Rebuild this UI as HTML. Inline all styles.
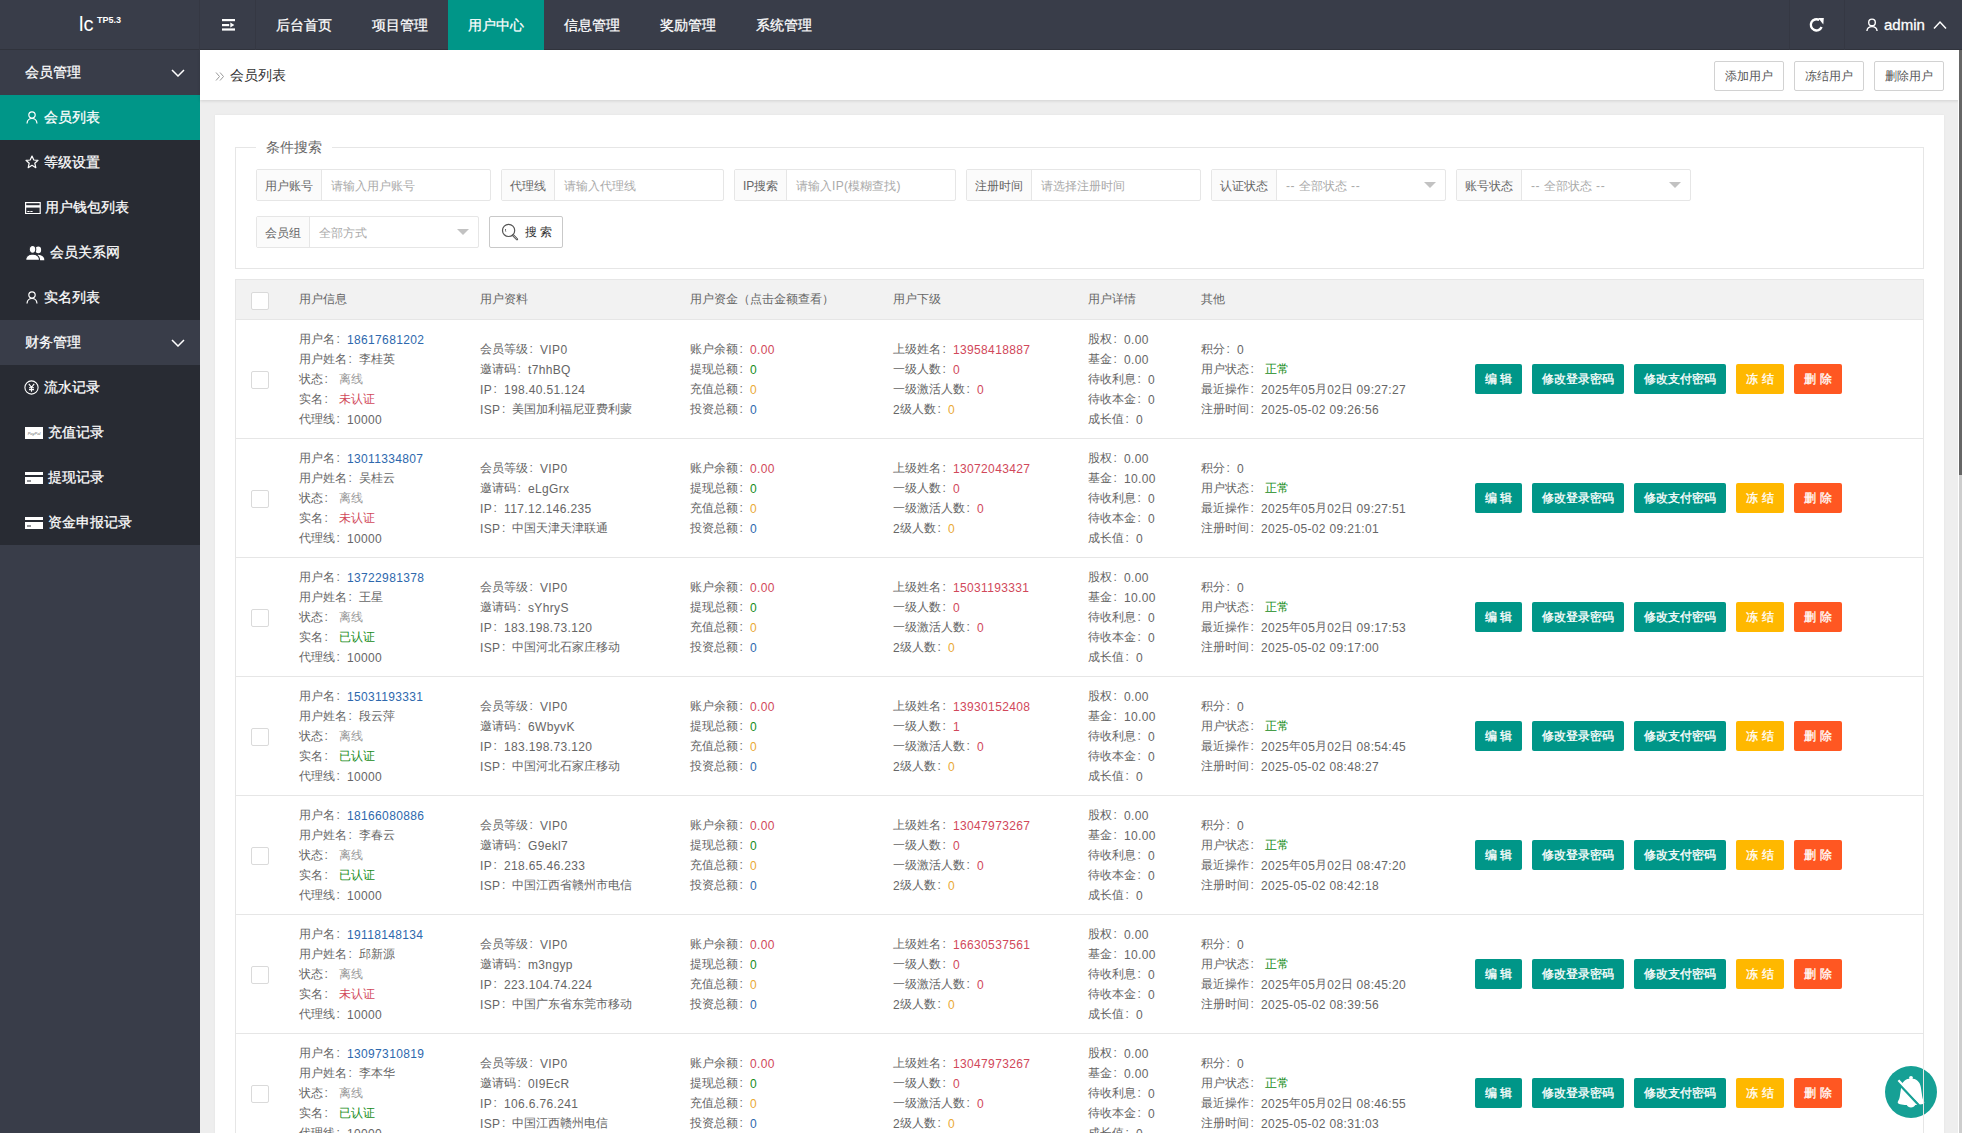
<!DOCTYPE html>
<html><head><meta charset="utf-8"><title>会员列表</title>
<style>
*{margin:0;padding:0;box-sizing:border-box}
html,body{width:1962px;height:1133px;overflow:hidden}
body{position:relative;background:#eeeeee;font-family:"Liberation Sans",sans-serif;font-size:12px;color:#666}
.abs{position:absolute}
.hdr{position:absolute;left:0;top:0;width:1962px;height:50px;background:#393D49;border-bottom:1px solid #30333c;z-index:2}
.logo{position:absolute;left:79px;top:11px;color:#fff;font-size:20px;line-height:26px}
.logo sup{font-size:9px;font-weight:bold;position:absolute;left:18px;top:3px;line-height:12px}
.vsep{position:absolute;top:0;width:1px;height:50px;background:#353843}
.nav{position:absolute;top:0;height:50px;width:96px;line-height:50px;text-align:center;color:#fff;font-size:14px;-webkit-text-stroke:.25px #fff}
.nav.on{background:#009688}
.side{position:absolute;left:0;top:50px;width:200px;height:1083px;background:#393D49}
.mh{position:absolute;left:0;width:200px;height:45px;line-height:45px;color:#fff;font-size:14px;padding-left:25px;-webkit-text-stroke:.25px #fff}
.mi{position:absolute;left:0;width:200px;height:45px;line-height:45px;color:#fff;font-size:14px;background:#282B33;-webkit-text-stroke:.25px #fff}
.mi.on{background:#009688}
.mi span{position:absolute;top:0}
.chev{position:absolute;left:171px;top:19px}
.bc{position:absolute;left:200px;top:50px;width:1759px;height:50px;background:#fff;box-shadow:0 1px 3px rgba(0,0,0,.12)}
.card{position:absolute;left:215px;top:115px;width:1729px;height:1100px;background:#fff;box-shadow:0 0 2px rgba(0,0,0,.06)}
.fs{position:absolute;left:235px;top:147px;width:1689px;height:122px;border:1px solid #e6e6e6}
.legend{position:absolute;left:256px;top:137px;height:20px;line-height:20px;padding:0 10px;background:#fff;font-size:14px;color:#666}
.grp{position:absolute;height:32px;border:1px solid #e6e6e6;border-radius:2px;background:#fff}
.grp .lb{position:absolute;left:0;top:0;height:30px;line-height:32px;padding:0 8px;background:#fbfbfb;border-right:1px solid #e6e6e6;color:#666;white-space:nowrap}
.grp .ph{position:absolute;top:0;height:30px;line-height:32px;color:#aaa;white-space:nowrap}
.tri{position:absolute;top:12px;width:0;height:0;border-left:6px solid transparent;border-right:6px solid transparent;border-top:6px solid #c2c2c2}
.sbtn{position:absolute;left:489px;top:216px;width:74px;height:32px;border:1px solid #c9c9c9;border-radius:2px;background:#fff;color:#333}
.tbl{position:absolute;left:235px;top:279px;width:1689px;height:900px;border:1px solid #e6e6e6;border-bottom:none;z-index:1}
.th{position:absolute;left:235px;top:280px;width:1689px;height:40px;background:#f2f2f2;border-bottom:1px solid #e6e6e6}
.th div{position:absolute;top:0;line-height:39px;color:#666;white-space:nowrap}
.cb{position:absolute;width:18px;height:18px;border:1px solid #dadada;border-radius:2px;background:#fff}
.row{position:absolute;left:235px;width:1689px;height:119px;border-bottom:1px solid #e6e6e6}
.col{position:absolute;line-height:20px;white-space:nowrap;color:#666}
.c5l{top:9px}.c4l{top:19px}
.sp{display:inline-block;width:4px}
.b{color:#2d68ad}.r{color:#d1485a}.g{color:#168c20}.o{color:#eaa935}.gr{color:#999}
.btn{position:absolute;top:44px;height:30px;line-height:30px;text-align:center;color:#fff;border-radius:2px;white-space:nowrap;font-size:12px;-webkit-text-stroke:.3px #fff}
.bt{background:#009688}.by{background:#FFB800}.br{background:#FF5722}
.hb{position:absolute;top:61px;width:70px;height:30px;line-height:28px;text-align:center;border:1px solid #d2d2d2;border-radius:2px;background:#fff;color:#555}
.scr{position:absolute;left:1959px;top:50px;width:3px;height:1083px;background:#cdcdcd}
.thumb{position:absolute;left:1959px;top:50px;width:3px;height:425px;background:#666}
.bell{position:absolute;left:1885px;top:1066px;width:52px;height:52px;border-radius:50%;background:#16A095}
b.n{font-weight:normal;letter-spacing:.35px;position:relative;top:1px}
i.k{font-style:normal;display:inline-block;width:12px;padding-left:1.5px}

</style></head><body>
<div class="hdr">
  <div class="logo">lc<sup>TP5.3</sup></div>
  <div class="vsep" style="left:199px"></div>
  <div class="vsep" style="left:255px"></div>
  <svg class="abs" style="left:221px;top:18px" width="15" height="14" viewBox="0 0 15 14"><rect x="1" y="1" width="13" height="2.2" fill="#fff"/><rect x="1" y="6" width="7.2" height="2.2" fill="#fff"/><path d="M9.3 4.6 L13.4 7.1 L9.3 9.6Z" fill="#fff"/><rect x="1" y="10.4" width="13" height="2.2" fill="#fff"/></svg>
  <div class="nav" style="left:256px">后台首页</div>
  <div class="nav" style="left:352px">项目管理</div>
  <div class="nav on" style="left:448px">用户中心</div>
  <div class="nav" style="left:544px">信息管理</div>
  <div class="nav" style="left:640px">奖励管理</div>
  <div class="nav" style="left:736px">系统管理</div>
  <div class="vsep" style="left:1789px"></div>
  <div class="vsep" style="left:1844px"></div>
  <svg class="abs" style="left:1808px;top:17px" width="16" height="16" viewBox="0 0 16 16"><path d="M13.6 10 A5.6 5.6 0 1 1 11.2 3" fill="none" stroke="#fff" stroke-width="2.4"/><path d="M10.2 0.9 L15.8 1.0 L15.3 7.4Z" fill="#fff"/></svg>
  <svg class="abs" style="left:1865px;top:18px" width="14" height="14" viewBox="0 0 14 14"><circle cx="7" cy="4.4" r="3.3" fill="none" stroke="#fff" stroke-width="1.4"/><path d="M1.9 13 C2.2 10.2 4.2 8.6 7 8.6 C9.8 8.6 11.8 10.2 12.1 13" fill="none" stroke="#fff" stroke-width="1.4"/></svg>
  <div class="abs" style="left:1884px;top:0;line-height:50px;font-size:15px;color:#fff;-webkit-text-stroke:.3px #fff">admin</div>
  <svg class="abs" style="left:1933px;top:20px" width="14" height="10" viewBox="0 0 14 10"><path d="M1 8.5 L7 2 L13 8.5" fill="none" stroke="#fff" stroke-width="1.5"/></svg>
</div>
<div class="side">
  <div class="mh" style="top:0">会员管理</div>
  <svg class="chev" style="top:19px" width="14" height="8" viewBox="0 0 14 8"><path d="M1 1 L7 7 L13 1" fill="none" stroke="#fff" stroke-width="1.5"/></svg>
  <div class="mi on" style="top:45px"><svg class="abs" style="left:26px;top:16px" width="12" height="13" viewBox="0 0 12 13"><circle cx="6" cy="4" r="3.2" fill="none" stroke="#fff" stroke-width="1.2"/><path d="M1 12.5 C1.3 9 3.3 7.5 6 7.5 C8.7 7.5 10.7 9 11 12.5" fill="none" stroke="#fff" stroke-width="1.2"/></svg><span style="left:44px">会员列表</span></div>
  <div class="mi" style="top:90px"><svg class="abs" style="left:25px;top:15px" width="14" height="14" viewBox="0 0 14 14"><path d="M7 1 L8.8 5 L13 5.3 L9.8 8.2 L10.8 12.7 L7 10.3 L3.2 12.7 L4.2 8.2 L1 5.3 L5.2 5Z" fill="none" stroke="#fff" stroke-width="1.2" stroke-linejoin="round"/></svg><span style="left:44px">等级设置</span></div>
  <div class="mi" style="top:135px"><svg class="abs" style="left:25px;top:17px" width="16" height="12" viewBox="0 0 16 12"><rect x="0.6" y="0.6" width="14.6" height="11" fill="none" stroke="#fff" stroke-width="1.2"/><rect x="0.6" y="3.2" width="14.6" height="2.4" fill="#fff"/><rect x="2.3" y="9" width="2.3" height="1" fill="#fff"/><rect x="5.3" y="9" width="2.3" height="1" fill="#fff"/></svg><span style="left:45px">用户钱包列表</span></div>
  <div class="mi" style="top:180px"><svg class="abs" style="left:26px;top:15px" width="19" height="16" viewBox="0 0 19 16"><ellipse cx="12.3" cy="4.9" rx="2.8" ry="3.3" fill="#fff"/><path d="M8 15.2 C8 11.5 9.5 10.2 12.3 9.8 C15.6 10.2 18.3 11.5 18.3 15.2Z" fill="#fff"/><g stroke="#282B33" stroke-width="1.1"><ellipse cx="6.5" cy="4.3" rx="3.3" ry="3.9" fill="#fff"/><path d="M-0.4 15.4 C-0.4 11 2.3 9.4 6.5 9 C10.7 9.4 13.6 11 13.6 15.4Z" fill="#fff"/></g></svg><span style="left:50px">会员关系网</span></div>
  <div class="mi" style="top:225px"><svg class="abs" style="left:26px;top:16px" width="12" height="13" viewBox="0 0 12 13"><circle cx="6" cy="4" r="3.2" fill="none" stroke="#fff" stroke-width="1.2"/><path d="M1 12.5 C1.3 9 3.3 7.5 6 7.5 C8.7 7.5 10.7 9 11 12.5" fill="none" stroke="#fff" stroke-width="1.2"/></svg><span style="left:44px">实名列表</span></div>
  <div class="mh" style="top:270px">财务管理</div>
  <svg class="chev" style="top:289px" width="14" height="8" viewBox="0 0 14 8"><path d="M1 1 L7 7 L13 1" fill="none" stroke="#fff" stroke-width="1.5"/></svg>
  <div class="mi" style="top:315px"><svg class="abs" style="left:24px;top:15px" width="15" height="15" viewBox="0 0 15 15"><circle cx="7.5" cy="7.5" r="6.6" fill="none" stroke="#fff" stroke-width="1.1"/><path d="M4.8 3.8 L7.5 7.3 L10.2 3.8 M7.5 7.3 V11.8 M5 7.8 H10 M5 9.6 H10" fill="none" stroke="#fff" stroke-width="1.1"/></svg><span style="left:44px">流水记录</span></div>
  <div class="mi" style="top:360px"><svg class="abs" style="left:25px;top:17px" width="18" height="12" viewBox="0 0 18 12"><rect x="0" y="0" width="18" height="12" fill="#fff"/><text x="9" y="7.5" font-size="4" font-style="italic" fill="#666" text-anchor="middle" font-family="Liberation Sans">PayPal</text></svg><span style="left:48px">充值记录</span></div>
  <div class="mi" style="top:405px"><svg class="abs" style="left:25px;top:17px" width="18" height="12" viewBox="0 0 18 12"><rect x="0" y="0" width="18" height="3" fill="#fff"/><rect x="0" y="5" width="18" height="7" fill="#fff"/><rect x="2" y="8.5" width="4" height="1" fill="#282B33"/></svg><span style="left:48px">提现记录</span></div>
  <div class="mi" style="top:450px"><svg class="abs" style="left:25px;top:17px" width="18" height="12" viewBox="0 0 18 12"><rect x="0" y="0" width="18" height="3" fill="#fff"/><rect x="0" y="5" width="18" height="7" fill="#fff"/><rect x="2" y="8.5" width="4" height="1" fill="#282B33"/></svg><span style="left:48px">资金申报记录</span></div>
</div>
<div class="bc">
  <svg class="abs" style="left:15px;top:22px" width="10" height="9" viewBox="0 0 10 9"><path d="M1 0.5 L4.5 4.5 L1 8.5 M5 0.5 L8.5 4.5 L5 8.5" fill="none" stroke="#999" stroke-width="1"/></svg>
  <div class="abs" style="left:30px;top:0;line-height:50px;font-size:14px;color:#333">会员列表</div>
</div>
<div class="hb" style="left:1714px">添加用户</div>
<div class="hb" style="left:1794px">冻结用户</div>
<div class="hb" style="left:1874px">删除用户</div>
<div class="card"></div>
<div class="fs"></div>
<div class="legend">条件搜索</div>
<div class="grp" style="left:256px;top:169px;width:235px"><div class="lb">用户账号</div><div class="ph" style="left:74px">请输入用户账号</div></div>
<div class="grp" style="left:501px;top:169px;width:223px"><div class="lb">代理线</div><div class="ph" style="left:62px">请输入代理线</div></div>
<div class="grp" style="left:734px;top:169px;width:222px"><div class="lb">IP搜索</div><div class="ph" style="left:61px">请输入<b class="n" style="top:0">IP(</b>模糊查找<b class="n" style="top:0">)</b></div></div>
<div class="grp" style="left:966px;top:169px;width:235px"><div class="lb">注册时间</div><div class="ph" style="left:74px">请选择注册时间</div></div>
<div class="grp" style="left:1211px;top:169px;width:235px"><div class="lb">认证状态</div><div class="ph" style="left:74px"><span style="letter-spacing:.6px">-- </span>全部状态<span style="letter-spacing:.6px"> --</span></div><div class="tri" style="left:212px"></div></div>
<div class="grp" style="left:1456px;top:169px;width:235px"><div class="lb">账号状态</div><div class="ph" style="left:74px"><span style="letter-spacing:.6px">-- </span>全部状态<span style="letter-spacing:.6px"> --</span></div><div class="tri" style="left:212px"></div></div>
<div class="grp" style="left:256px;top:216px;width:223px"><div class="lb">会员组</div><div class="ph" style="left:62px">全部方式</div><div class="tri" style="left:200px"></div></div>
<div class="sbtn"><svg class="abs" style="left:10.5px;top:5px" width="20" height="20" viewBox="0 0 20 20"><circle cx="7.6" cy="8.4" r="6.1" fill="none" stroke="#555" stroke-width="1.2"/><path d="M4.6 7 C4.4 7.8 4.4 8.8 4.8 9.6" fill="none" stroke="#555" stroke-width="0.9"/><path d="M12.2 13.4 L16 17.2" stroke="#555" stroke-width="2.3" stroke-linecap="round"/><path d="M12.6 13.8 L15.6 16.8" stroke="#ddd" stroke-width="0.8" stroke-linecap="round"/></svg><div class="abs" style="left:35px;top:0;line-height:31px">搜&nbsp;索</div></div>
<div class="th">
  <div class="cb" style="left:16px;top:12px"></div>
  <div style="left:64px">用户信息</div>
  <div style="left:245px">用户资料</div>
  <div style="left:455px">用户资金（点击金额查看）</div>
  <div style="left:658px">用户下级</div>
  <div style="left:853px">用户详情</div>
  <div style="left:966px">其他</div>
</div>
<div class="row" style="top:320px">
<div class="cb" style="left:16px;top:51px"></div>
<div class="col c5l" style="left:64px">用户名<i class="k">:</i><span class="b"><b class="n">18617681202</b></span><br>用户姓名<i class="k">:</i>李桂英<br>状态<i class="k">:</i><span class="sp"> </span><span class="gr">离线</span><br>实名<i class="k">:</i><span class="sp"> </span><span class="r">未认证</span><br>代理线<i class="k">:</i><b class="n">10000</b></div>
<div class="col c4l" style="left:245px">会员等级<i class="k">:</i><b class="n">VIP0</b><br>邀请码<i class="k">:</i><b class="n">t7hhBQ</b><br><b class="n">IP</b><i class="k">:</i><b class="n">198.40.51.124</b><br><b class="n">ISP</b><i class="k">:</i>美国加利福尼亚费利蒙</div>
<div class="col c4l" style="left:455px">账户余额<i class="k">:</i><span class="r"><b class="n">0.00</b></span><br>提现总额<i class="k">:</i><span class="g"><b class="n">0</b></span><br>充值总额<i class="k">:</i><span class="o"><b class="n">0</b></span><br>投资总额<i class="k">:</i><span class="b"><b class="n">0</b></span></div>
<div class="col c4l" style="left:658px">上级姓名<i class="k">:</i><span class="r"><b class="n">13958418887</b></span><br>一级人数<i class="k">:</i><span class="r"><b class="n">0</b></span><br>一级激活人数<i class="k">:</i><span class="r"><b class="n">0</b></span><br><b class="n">2</b>级人数<i class="k">:</i><span class="o"><b class="n">0</b></span></div>
<div class="col c5l" style="left:853px">股权<i class="k">:</i><b class="n">0.00</b><br>基金<i class="k">:</i><b class="n">0.00</b><br>待收利息<i class="k">:</i><b class="n">0</b><br>待收本金<i class="k">:</i><b class="n">0</b><br>成长值<i class="k">:</i><b class="n">0</b></div>
<div class="col c4l" style="left:966px">积分<i class="k">:</i><b class="n">0</b><br>用户状态<i class="k">:</i><span class="sp"> </span><span class="g">正常</span><br>最近操作<i class="k">:</i><b class="n">2025</b>年<b class="n">05</b>月<b class="n">02</b>日 <b class="n">09:27:27</b><br>注册时间<i class="k">:</i><b class="n">2025-05-02 09:26:56</b></div>
<div class="btn bt" style="left:1240px;width:47px">编 辑</div>
<div class="btn bt" style="left:1297px;width:92px">修改登录密码</div>
<div class="btn bt" style="left:1399px;width:92px">修改支付密码</div>
<div class="btn by" style="left:1501px;width:48px">冻 结</div>
<div class="btn br" style="left:1559px;width:48px">删 除</div>
</div>
<div class="row" style="top:439px">
<div class="cb" style="left:16px;top:51px"></div>
<div class="col c5l" style="left:64px">用户名<i class="k">:</i><span class="b"><b class="n">13011334807</b></span><br>用户姓名<i class="k">:</i>吴桂云<br>状态<i class="k">:</i><span class="sp"> </span><span class="gr">离线</span><br>实名<i class="k">:</i><span class="sp"> </span><span class="r">未认证</span><br>代理线<i class="k">:</i><b class="n">10000</b></div>
<div class="col c4l" style="left:245px">会员等级<i class="k">:</i><b class="n">VIP0</b><br>邀请码<i class="k">:</i><b class="n">eLgGrx</b><br><b class="n">IP</b><i class="k">:</i><b class="n">117.12.146.235</b><br><b class="n">ISP</b><i class="k">:</i>中国天津天津联通</div>
<div class="col c4l" style="left:455px">账户余额<i class="k">:</i><span class="r"><b class="n">0.00</b></span><br>提现总额<i class="k">:</i><span class="g"><b class="n">0</b></span><br>充值总额<i class="k">:</i><span class="o"><b class="n">0</b></span><br>投资总额<i class="k">:</i><span class="b"><b class="n">0</b></span></div>
<div class="col c4l" style="left:658px">上级姓名<i class="k">:</i><span class="r"><b class="n">13072043427</b></span><br>一级人数<i class="k">:</i><span class="r"><b class="n">0</b></span><br>一级激活人数<i class="k">:</i><span class="r"><b class="n">0</b></span><br><b class="n">2</b>级人数<i class="k">:</i><span class="o"><b class="n">0</b></span></div>
<div class="col c5l" style="left:853px">股权<i class="k">:</i><b class="n">0.00</b><br>基金<i class="k">:</i><b class="n">10.00</b><br>待收利息<i class="k">:</i><b class="n">0</b><br>待收本金<i class="k">:</i><b class="n">0</b><br>成长值<i class="k">:</i><b class="n">0</b></div>
<div class="col c4l" style="left:966px">积分<i class="k">:</i><b class="n">0</b><br>用户状态<i class="k">:</i><span class="sp"> </span><span class="g">正常</span><br>最近操作<i class="k">:</i><b class="n">2025</b>年<b class="n">05</b>月<b class="n">02</b>日 <b class="n">09:27:51</b><br>注册时间<i class="k">:</i><b class="n">2025-05-02 09:21:01</b></div>
<div class="btn bt" style="left:1240px;width:47px">编 辑</div>
<div class="btn bt" style="left:1297px;width:92px">修改登录密码</div>
<div class="btn bt" style="left:1399px;width:92px">修改支付密码</div>
<div class="btn by" style="left:1501px;width:48px">冻 结</div>
<div class="btn br" style="left:1559px;width:48px">删 除</div>
</div>
<div class="row" style="top:558px">
<div class="cb" style="left:16px;top:51px"></div>
<div class="col c5l" style="left:64px">用户名<i class="k">:</i><span class="b"><b class="n">13722981378</b></span><br>用户姓名<i class="k">:</i>王星<br>状态<i class="k">:</i><span class="sp"> </span><span class="gr">离线</span><br>实名<i class="k">:</i><span class="sp"> </span><span class="g">已认证</span><br>代理线<i class="k">:</i><b class="n">10000</b></div>
<div class="col c4l" style="left:245px">会员等级<i class="k">:</i><b class="n">VIP0</b><br>邀请码<i class="k">:</i><b class="n">sYhryS</b><br><b class="n">IP</b><i class="k">:</i><b class="n">183.198.73.120</b><br><b class="n">ISP</b><i class="k">:</i>中国河北石家庄移动</div>
<div class="col c4l" style="left:455px">账户余额<i class="k">:</i><span class="r"><b class="n">0.00</b></span><br>提现总额<i class="k">:</i><span class="g"><b class="n">0</b></span><br>充值总额<i class="k">:</i><span class="o"><b class="n">0</b></span><br>投资总额<i class="k">:</i><span class="b"><b class="n">0</b></span></div>
<div class="col c4l" style="left:658px">上级姓名<i class="k">:</i><span class="r"><b class="n">15031193331</b></span><br>一级人数<i class="k">:</i><span class="r"><b class="n">0</b></span><br>一级激活人数<i class="k">:</i><span class="r"><b class="n">0</b></span><br><b class="n">2</b>级人数<i class="k">:</i><span class="o"><b class="n">0</b></span></div>
<div class="col c5l" style="left:853px">股权<i class="k">:</i><b class="n">0.00</b><br>基金<i class="k">:</i><b class="n">10.00</b><br>待收利息<i class="k">:</i><b class="n">0</b><br>待收本金<i class="k">:</i><b class="n">0</b><br>成长值<i class="k">:</i><b class="n">0</b></div>
<div class="col c4l" style="left:966px">积分<i class="k">:</i><b class="n">0</b><br>用户状态<i class="k">:</i><span class="sp"> </span><span class="g">正常</span><br>最近操作<i class="k">:</i><b class="n">2025</b>年<b class="n">05</b>月<b class="n">02</b>日 <b class="n">09:17:53</b><br>注册时间<i class="k">:</i><b class="n">2025-05-02 09:17:00</b></div>
<div class="btn bt" style="left:1240px;width:47px">编 辑</div>
<div class="btn bt" style="left:1297px;width:92px">修改登录密码</div>
<div class="btn bt" style="left:1399px;width:92px">修改支付密码</div>
<div class="btn by" style="left:1501px;width:48px">冻 结</div>
<div class="btn br" style="left:1559px;width:48px">删 除</div>
</div>
<div class="row" style="top:677px">
<div class="cb" style="left:16px;top:51px"></div>
<div class="col c5l" style="left:64px">用户名<i class="k">:</i><span class="b"><b class="n">15031193331</b></span><br>用户姓名<i class="k">:</i>段云萍<br>状态<i class="k">:</i><span class="sp"> </span><span class="gr">离线</span><br>实名<i class="k">:</i><span class="sp"> </span><span class="g">已认证</span><br>代理线<i class="k">:</i><b class="n">10000</b></div>
<div class="col c4l" style="left:245px">会员等级<i class="k">:</i><b class="n">VIP0</b><br>邀请码<i class="k">:</i><b class="n">6WbyvK</b><br><b class="n">IP</b><i class="k">:</i><b class="n">183.198.73.120</b><br><b class="n">ISP</b><i class="k">:</i>中国河北石家庄移动</div>
<div class="col c4l" style="left:455px">账户余额<i class="k">:</i><span class="r"><b class="n">0.00</b></span><br>提现总额<i class="k">:</i><span class="g"><b class="n">0</b></span><br>充值总额<i class="k">:</i><span class="o"><b class="n">0</b></span><br>投资总额<i class="k">:</i><span class="b"><b class="n">0</b></span></div>
<div class="col c4l" style="left:658px">上级姓名<i class="k">:</i><span class="r"><b class="n">13930152408</b></span><br>一级人数<i class="k">:</i><span class="r"><b class="n">1</b></span><br>一级激活人数<i class="k">:</i><span class="r"><b class="n">0</b></span><br><b class="n">2</b>级人数<i class="k">:</i><span class="o"><b class="n">0</b></span></div>
<div class="col c5l" style="left:853px">股权<i class="k">:</i><b class="n">0.00</b><br>基金<i class="k">:</i><b class="n">10.00</b><br>待收利息<i class="k">:</i><b class="n">0</b><br>待收本金<i class="k">:</i><b class="n">0</b><br>成长值<i class="k">:</i><b class="n">0</b></div>
<div class="col c4l" style="left:966px">积分<i class="k">:</i><b class="n">0</b><br>用户状态<i class="k">:</i><span class="sp"> </span><span class="g">正常</span><br>最近操作<i class="k">:</i><b class="n">2025</b>年<b class="n">05</b>月<b class="n">02</b>日 <b class="n">08:54:45</b><br>注册时间<i class="k">:</i><b class="n">2025-05-02 08:48:27</b></div>
<div class="btn bt" style="left:1240px;width:47px">编 辑</div>
<div class="btn bt" style="left:1297px;width:92px">修改登录密码</div>
<div class="btn bt" style="left:1399px;width:92px">修改支付密码</div>
<div class="btn by" style="left:1501px;width:48px">冻 结</div>
<div class="btn br" style="left:1559px;width:48px">删 除</div>
</div>
<div class="row" style="top:796px">
<div class="cb" style="left:16px;top:51px"></div>
<div class="col c5l" style="left:64px">用户名<i class="k">:</i><span class="b"><b class="n">18166080886</b></span><br>用户姓名<i class="k">:</i>李春云<br>状态<i class="k">:</i><span class="sp"> </span><span class="gr">离线</span><br>实名<i class="k">:</i><span class="sp"> </span><span class="g">已认证</span><br>代理线<i class="k">:</i><b class="n">10000</b></div>
<div class="col c4l" style="left:245px">会员等级<i class="k">:</i><b class="n">VIP0</b><br>邀请码<i class="k">:</i><b class="n">G9ekl7</b><br><b class="n">IP</b><i class="k">:</i><b class="n">218.65.46.233</b><br><b class="n">ISP</b><i class="k">:</i>中国江西省赣州市电信</div>
<div class="col c4l" style="left:455px">账户余额<i class="k">:</i><span class="r"><b class="n">0.00</b></span><br>提现总额<i class="k">:</i><span class="g"><b class="n">0</b></span><br>充值总额<i class="k">:</i><span class="o"><b class="n">0</b></span><br>投资总额<i class="k">:</i><span class="b"><b class="n">0</b></span></div>
<div class="col c4l" style="left:658px">上级姓名<i class="k">:</i><span class="r"><b class="n">13047973267</b></span><br>一级人数<i class="k">:</i><span class="r"><b class="n">0</b></span><br>一级激活人数<i class="k">:</i><span class="r"><b class="n">0</b></span><br><b class="n">2</b>级人数<i class="k">:</i><span class="o"><b class="n">0</b></span></div>
<div class="col c5l" style="left:853px">股权<i class="k">:</i><b class="n">0.00</b><br>基金<i class="k">:</i><b class="n">10.00</b><br>待收利息<i class="k">:</i><b class="n">0</b><br>待收本金<i class="k">:</i><b class="n">0</b><br>成长值<i class="k">:</i><b class="n">0</b></div>
<div class="col c4l" style="left:966px">积分<i class="k">:</i><b class="n">0</b><br>用户状态<i class="k">:</i><span class="sp"> </span><span class="g">正常</span><br>最近操作<i class="k">:</i><b class="n">2025</b>年<b class="n">05</b>月<b class="n">02</b>日 <b class="n">08:47:20</b><br>注册时间<i class="k">:</i><b class="n">2025-05-02 08:42:18</b></div>
<div class="btn bt" style="left:1240px;width:47px">编 辑</div>
<div class="btn bt" style="left:1297px;width:92px">修改登录密码</div>
<div class="btn bt" style="left:1399px;width:92px">修改支付密码</div>
<div class="btn by" style="left:1501px;width:48px">冻 结</div>
<div class="btn br" style="left:1559px;width:48px">删 除</div>
</div>
<div class="row" style="top:915px">
<div class="cb" style="left:16px;top:51px"></div>
<div class="col c5l" style="left:64px">用户名<i class="k">:</i><span class="b"><b class="n">19118148134</b></span><br>用户姓名<i class="k">:</i>邱新源<br>状态<i class="k">:</i><span class="sp"> </span><span class="gr">离线</span><br>实名<i class="k">:</i><span class="sp"> </span><span class="r">未认证</span><br>代理线<i class="k">:</i><b class="n">10000</b></div>
<div class="col c4l" style="left:245px">会员等级<i class="k">:</i><b class="n">VIP0</b><br>邀请码<i class="k">:</i><b class="n">m3ngyp</b><br><b class="n">IP</b><i class="k">:</i><b class="n">223.104.74.224</b><br><b class="n">ISP</b><i class="k">:</i>中国广东省东莞市移动</div>
<div class="col c4l" style="left:455px">账户余额<i class="k">:</i><span class="r"><b class="n">0.00</b></span><br>提现总额<i class="k">:</i><span class="g"><b class="n">0</b></span><br>充值总额<i class="k">:</i><span class="o"><b class="n">0</b></span><br>投资总额<i class="k">:</i><span class="b"><b class="n">0</b></span></div>
<div class="col c4l" style="left:658px">上级姓名<i class="k">:</i><span class="r"><b class="n">16630537561</b></span><br>一级人数<i class="k">:</i><span class="r"><b class="n">0</b></span><br>一级激活人数<i class="k">:</i><span class="r"><b class="n">0</b></span><br><b class="n">2</b>级人数<i class="k">:</i><span class="o"><b class="n">0</b></span></div>
<div class="col c5l" style="left:853px">股权<i class="k">:</i><b class="n">0.00</b><br>基金<i class="k">:</i><b class="n">10.00</b><br>待收利息<i class="k">:</i><b class="n">0</b><br>待收本金<i class="k">:</i><b class="n">0</b><br>成长值<i class="k">:</i><b class="n">0</b></div>
<div class="col c4l" style="left:966px">积分<i class="k">:</i><b class="n">0</b><br>用户状态<i class="k">:</i><span class="sp"> </span><span class="g">正常</span><br>最近操作<i class="k">:</i><b class="n">2025</b>年<b class="n">05</b>月<b class="n">02</b>日 <b class="n">08:45:20</b><br>注册时间<i class="k">:</i><b class="n">2025-05-02 08:39:56</b></div>
<div class="btn bt" style="left:1240px;width:47px">编 辑</div>
<div class="btn bt" style="left:1297px;width:92px">修改登录密码</div>
<div class="btn bt" style="left:1399px;width:92px">修改支付密码</div>
<div class="btn by" style="left:1501px;width:48px">冻 结</div>
<div class="btn br" style="left:1559px;width:48px">删 除</div>
</div>
<div class="row" style="top:1034px">
<div class="cb" style="left:16px;top:51px"></div>
<div class="col c5l" style="left:64px">用户名<i class="k">:</i><span class="b"><b class="n">13097310819</b></span><br>用户姓名<i class="k">:</i>李本华<br>状态<i class="k">:</i><span class="sp"> </span><span class="gr">离线</span><br>实名<i class="k">:</i><span class="sp"> </span><span class="g">已认证</span><br>代理线<i class="k">:</i><b class="n">10000</b></div>
<div class="col c4l" style="left:245px">会员等级<i class="k">:</i><b class="n">VIP0</b><br>邀请码<i class="k">:</i><b class="n">0I9EcR</b><br><b class="n">IP</b><i class="k">:</i><b class="n">106.6.76.241</b><br><b class="n">ISP</b><i class="k">:</i>中国江西赣州电信</div>
<div class="col c4l" style="left:455px">账户余额<i class="k">:</i><span class="r"><b class="n">0.00</b></span><br>提现总额<i class="k">:</i><span class="g"><b class="n">0</b></span><br>充值总额<i class="k">:</i><span class="o"><b class="n">0</b></span><br>投资总额<i class="k">:</i><span class="b"><b class="n">0</b></span></div>
<div class="col c4l" style="left:658px">上级姓名<i class="k">:</i><span class="r"><b class="n">13047973267</b></span><br>一级人数<i class="k">:</i><span class="r"><b class="n">0</b></span><br>一级激活人数<i class="k">:</i><span class="r"><b class="n">0</b></span><br><b class="n">2</b>级人数<i class="k">:</i><span class="o"><b class="n">0</b></span></div>
<div class="col c5l" style="left:853px">股权<i class="k">:</i><b class="n">0.00</b><br>基金<i class="k">:</i><b class="n">0.00</b><br>待收利息<i class="k">:</i><b class="n">0</b><br>待收本金<i class="k">:</i><b class="n">0</b><br>成长值<i class="k">:</i><b class="n">0</b></div>
<div class="col c4l" style="left:966px">积分<i class="k">:</i><b class="n">0</b><br>用户状态<i class="k">:</i><span class="sp"> </span><span class="g">正常</span><br>最近操作<i class="k">:</i><b class="n">2025</b>年<b class="n">05</b>月<b class="n">02</b>日 <b class="n">08:46:55</b><br>注册时间<i class="k">:</i><b class="n">2025-05-02 08:31:03</b></div>
<div class="btn bt" style="left:1240px;width:47px">编 辑</div>
<div class="btn bt" style="left:1297px;width:92px">修改登录密码</div>
<div class="btn bt" style="left:1399px;width:92px">修改支付密码</div>
<div class="btn by" style="left:1501px;width:48px">冻 结</div>
<div class="btn br" style="left:1559px;width:48px">删 除</div>
</div>
<div class="tbl"></div>
<div class="scr"></div><div class="abs" style="left:1958px;top:100px;width:1px;height:1033px;background:#fff"></div>
<div class="thumb"></div>
<div class="bell"><svg class="abs" style="left:0;top:0" width="52" height="52" viewBox="0 0 52 52"><circle cx="26" cy="11.8" r="1.9" fill="#fff"/><path d="M26 12.5 C31.3 12.5 34.8 15.5 35.8 21 L37.3 31 C37.8 34 39.3 35 39.3 36.6 C39.3 38.2 35.5 38.9 30.2 39.1 C29.6 40.6 28 41.5 26 41.5 C24 41.5 22.4 40.6 21.8 39.1 C16.5 38.9 12.7 38.2 12.7 36.6 C12.7 35 14.2 34 14.7 31 L16.2 21 C17.2 15.5 20.7 12.5 26 12.5Z" fill="#fff"/><path d="M11.5 15.2 L34.5 39.6" stroke="#16A095" stroke-width="2.6"/><path d="M13.4 14.2 L35.6 37.7" stroke="#fff" stroke-width="2.2"/></svg></div>

</body></html>
